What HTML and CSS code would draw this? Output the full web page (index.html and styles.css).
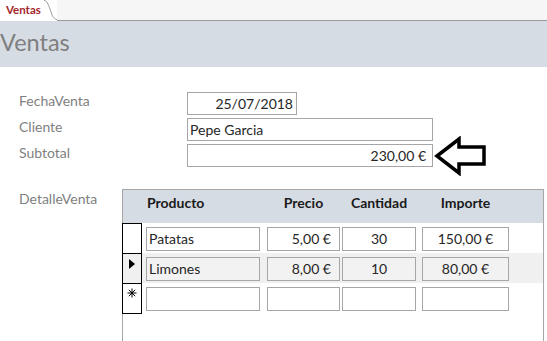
FILE: index.html
```html
<!DOCTYPE html>
<html>
<head>
<meta charset="utf-8">
<link rel="stylesheet" href="styles.css">
</head>
<body>
<div class="page">
  <div class="tabbar">
    <div class="tab">
      <span class="tab-label">Ventas</span>
      <svg class="tab-edge" width="14" height="21" viewBox="0 0 14 21"><path d="M0 0 L1 0 C4 0 5 4 7 9 C9 15 10 19 14 19.5 L14 21 L0 21 Z" fill="#fff"/><path d="M1 0.5 C4 0.5 5 4 7 9 C9 15 10 19 14 19.5" fill="none" stroke="#9a9a9a" stroke-width="1"/></svg>
    </div>
    <div class="tab-rest"></div>
  </div>
  <div class="header">
    <div class="title">Ventas</div>
  </div>
  <div class="form">
    <div class="fields">
      <div class="label">FechaVenta</div>
      <div class="box box-date">25/07/2018</div>
      <div class="label">Cliente</div>
      <div class="box box-wide">Pepe Garcia</div>
      <div class="label">Subtotal</div>
      <div class="subtotal-cell">
        <div class="box box-wide align-right">230,00 €</div>
        <svg class="arrow" width="54" height="40" viewBox="0 0 54 40"><path d="M3 20 L25 3 L25 11 L50 11 L50 28 L25 28 L25 37 Z" fill="#fff" stroke="#000" stroke-width="3.5" stroke-linejoin="miter"/></svg>
      </div>
    </div>
    <div class="detail">
      <div class="label detail-label">DetalleVenta</div>
      <div class="subform">
        <div class="sf-header">
          <div class="sel-spacer"></div>
          <div class="col c1 hd hd-left">Producto</div>
          <div class="col c2 hd">Precio</div>
          <div class="col c3 hd">Cantidad</div>
          <div class="col c4 hd">Importe</div>
        </div>
        <div class="sf-row">
          <div class="sel"></div>
          <div class="col c1 cell">Patatas</div>
          <div class="col c2 cell align-right">5,00 €</div>
          <div class="col c3 cell align-center">30</div>
          <div class="col c4 cell align-center">150,00 €</div>
        </div>
        <div class="sf-row alt">
          <div class="sel"><svg width="8" height="12" viewBox="0 0 8 12"><path d="M1 1 L7 6 L1 11 Z" fill="#000"/></svg></div>
          <div class="col c1 cell">Limones</div>
          <div class="col c2 cell align-right">8,00 €</div>
          <div class="col c3 cell align-center">10</div>
          <div class="col c4 cell align-center">80,00 €</div>
        </div>
        <div class="sf-row">
          <div class="sel sel-last"><svg width="10" height="10" viewBox="0 0 10 10"><path d="M5 0.5 V9.5 M0.5 5 H9.5 M1.8 1.8 L8.2 8.2 M8.2 1.8 L1.8 8.2" stroke="#000" stroke-width="1" fill="none"/></svg></div>
          <div class="col c1 cell"></div>
          <div class="col c2 cell"></div>
          <div class="col c3 cell"></div>
          <div class="col c4 cell"></div>
        </div>
      </div>
    </div>
  </div>
</div>
</body>
</html>
```

FILE: styles.css
```css
* { box-sizing: border-box; }
html, body { margin: 0; padding: 0; background: #fff; }
body {
  width: 547px;
  height: 341px;
  overflow: hidden;
  font-family: Lato, "Open Sans", "Liberation Sans", sans-serif;
}
.page { width: 547px; height: 341px; display: flex; flex-direction: column; }

.tabbar { display: flex; height: 21px; background: #f6f6f6; }
.tab { display: flex; background: #fff; height: 21px; }
.tab-label {
  padding: 3px 0 0 6px;
  width: 43px;
  font-size: 11.5px;
  font-weight: bold;
  color: #a4262c;
}
.tab-edge { display: block; }
.tab-rest { flex: 1; border-bottom: 1.5px solid #9a9a9a; }

.header { height: 46px; background: #d6dce4; padding: 6px 0 0 0; }
.title { font-size: 23.5px; color: #7f7f7f; line-height: 30px; }

.form { flex: 1; padding: 25px 0 0 19px; display: flex; flex-direction: column; }
.fields {
  display: grid;
  grid-template-columns: 168px auto;
  row-gap: 3px;
  align-items: center;
  justify-items: start;
}
.label { font-size: 14px; color: #7f7f7f; line-height: 18px; margin-top: -5px; }
.box {
  height: 23px;
  border: 1px solid #a6a6a6;
  background: #fff;
  font-size: 14px;
  line-height: 21px;
  color: #262626;
  padding: 0 2px;
  white-space: nowrap;
}
.box-date { width: 110px; text-align: right; padding-right: 3px; }
.box-wide { width: 246px; }
.subtotal-cell { position: relative; }
.arrow { position: absolute; left: 247px; top: -8px; }
.align-right { text-align: right; padding-right: 6px; }
.align-center { text-align: center; }

.detail { display: flex; margin-top: 22px; flex: 1; }
.detail-label { width: 103px; margin-top: 0; padding-top: 1px; }
.subform {
  flex: 1;
  margin-right: 3px;
  border: 1px solid #a6a6a6;
  border-bottom: none;
}
.sf-header { display: flex; height: 33px; background: #d6dce4; align-items: flex-start; padding-top: 4px; }
.sel-spacer { width: 19px; }
.hd { font-size: 14px; font-weight: bold; color: #1a1a1a; text-align: center; }
.hd-left { text-align: left; padding-left: 1px; }
.sf-row { display: flex; height: 30px; align-items: center; }
.sf-row.alt { background: #f0f0f0; }
.sel {
  width: 20px;
  height: 30px;
  margin-left: -1px;
  border: 1px solid #000;
  border-bottom: none;
  display: flex;
  align-items: flex-start;
  justify-content: center;
  padding-top: 4px;
}
.sel-last { height: 31px; border-bottom: 1px solid #000; }
.col { flex: none; }
.c1 { width: 114px; margin-left: 4px; }
.c2 { width: 73px; margin-left: 7px; }
.c3 { width: 74px; margin-left: 2px; }
.c4 { width: 87px; margin-left: 6px; }
.cell {
  height: 24px;
  border: 1px solid #a6a6a6;
  background: #fff;
  font-size: 14px;
  line-height: 22px;
  color: #262626;
  padding: 0 2px;
  margin-top: 1px;
}
.alt .cell { background: #f2f2f2; }
.cell.align-right { padding-right: 8px; }
```
